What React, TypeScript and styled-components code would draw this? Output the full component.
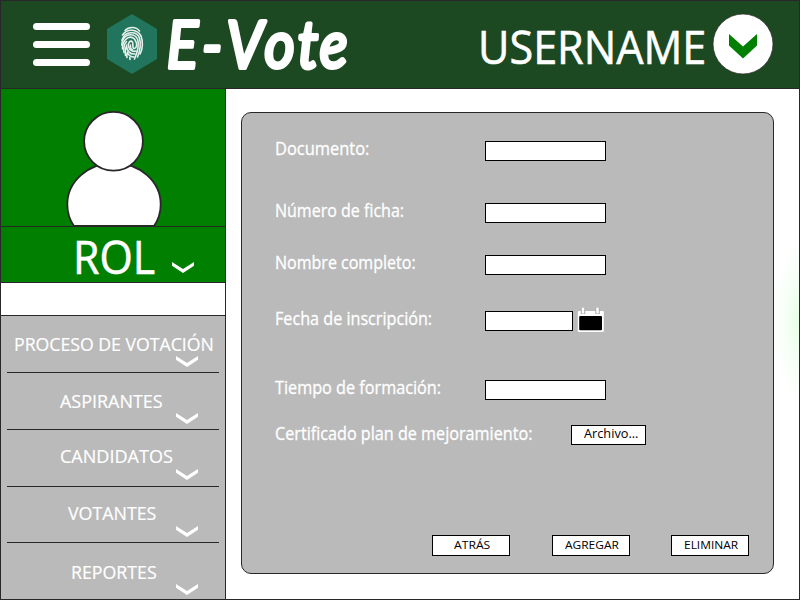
import React, { useLayoutEffect, useRef, useState } from "react";
import styled, { createGlobalStyle } from "styled-components";

const INK = "#29272a";
const GREEN = "#007f00";
const GRAY = "#bababa";

const GlobalStyle = createGlobalStyle`
  * { box-sizing: border-box; }
  body { margin: 0; background: #fff; }
`;

const Page = styled.div`
  width: 800px;
  height: 600px;
  display: flex;
  flex-direction: column;
  overflow: hidden;
  border: 1px solid ${INK};
  background: #fff;
  color: #fff;
  font-family: "Open Sans", "Noto Sans", sans-serif;
`;

const TextBox = styled.span<{ $w: number; $size: number; $lh: number }>`
  display: block;
  flex: none;
  width: ${(p) => p.$w}px;
  height: ${(p) => p.$lh}px;
  font-size: ${(p) => p.$size}px;
  line-height: ${(p) => p.$lh}px;
  white-space: nowrap;
`;

const TextInner = styled.span`
  display: inline-block;
  transform-origin: 0 50%;
`;

type FitProps = { w: number; size: number; lh: number; children: string; className?: string };

/* Condenses or widens a line of text so that it takes exactly the given width. */
function FitText({ w, size, lh, children, className }: FitProps) {
  const ref = useRef<HTMLSpanElement>(null);
  const [scale, setScale] = useState(1);
  useLayoutEffect(() => {
    if (ref.current) setScale(w / ref.current.offsetWidth);
  }, [w, size, children]);
  return (
    <TextBox $w={w} $size={size} $lh={lh} className={className}>
      <TextInner ref={ref} style={{ transform: `scaleX(${scale})` }}>
        {children}
      </TextInner>
    </TextBox>
  );
}

const Header = styled.header`
  flex: none;
  height: 88px;
  display: flex;
  align-items: flex-start;
  background: #1c4921;
  border-bottom: 1px solid ${INK};
`;

const MenuButton = styled.div`
  width: 57px;
  margin: 22px 0 0 32px;
  display: flex;
  flex-direction: column;
  gap: 11px;
`;

const Bar = styled.span`
  height: 7px;
  border-radius: 4px;
  background: #fff;
`;

const Hexagon = styled.svg`
  flex: none;
  width: 50px;
  height: 60px;
  margin: 13px 0 0 17px;
`;

const Brand = styled.svg`
  flex: none;
  width: 190px;
  height: 86px;
  margin-left: 8px;
  font-family: Lato, sans-serif;
  font-style: italic;
  font-weight: 400;
  font-size: 66px;
`;

const UserName = styled(FitText)`
  margin: 14px 0 0 auto;
  -webkit-text-stroke: 0.6px #fff;
`;

const UserToggle = styled.svg`
  flex: none;
  width: 62px;
  height: 62px;
  margin: 12px 25px 0 6px;
`;

const Body = styled.div`
  flex: 1;
  display: flex;
  min-height: 0;
`;

const Sidebar = styled.aside`
  flex: none;
  width: 225px;
  border-right: 1px solid ${INK};
  display: flex;
  flex-direction: column;
`;

const AvatarBox = styled.div`
  height: 138px;
  background: ${GREEN};
  border-bottom: 1px solid ${INK};
  svg { display: block; }
`;

const Role = styled.div`
  height: 56px;
  display: flex;
  background: ${GREEN};
  border-bottom: 1px solid ${INK};
`;

const RoleName = styled(FitText)`
  margin: -2px 0 0 72px;
  -webkit-text-stroke: 0.6px #fff;
`;

const Gap = styled.div`
  height: 33px;
  border-bottom: 1px solid ${INK};
`;

const Menu = styled.nav`
  flex: 1;
  padding: 0 6px;
  background: ${GRAY};
`;

const MenuItem = styled.div<{ $h: number; $top: number; $left: number; $gap: number }>`
  height: ${(p) => p.$h}px;
  padding: ${(p) => p.$top}px 0 0 ${(p) => p.$left}px;
  display: flex;
  flex-direction: column;
  gap: ${(p) => p.$gap}px;
  border-bottom: 1px solid ${INK};
  -webkit-text-stroke: 0.2px #fff;
  &:last-child { border-bottom: 0; }
  svg { margin-left: ${(p) => 169 - p.$left}px; }
`;

const ChevronSvg = styled.svg`
  display: block;
  flex: none;
  width: 22px;
  height: 11px;
`;

const RoleChevron = styled.div`
  margin: 35px 0 0 17px;
`;

function Chevron() {
  return (
    <ChevronSvg viewBox="0 0 22 11">
      <path d="M0 0 L11 7 L22 0 V3.8 L11 11 L0 3.8 Z" fill="#fff" />
    </ChevronSvg>
  );
}

const Main = styled.main`
  flex: 1;
  padding: 23px 25px 0 15px;
  background: radial-gradient(ellipse 25px 80px at 573px 232px, #e6ffe6, #f4fff4 45%, rgba(255, 255, 255, 0) 100%) #fff;
`;

const Panel = styled.form`
  height: 462px;
  padding: 25px 24px 0 33px;
  display: flex;
  flex-direction: column;
  background: ${GRAY};
  border: 1px solid ${INK};
  border-radius: 10px;
`;

const Field = styled.div<{ $h: number }>`
  flex: none;
  height: ${(p) => p.$h}px;
  display: flex;
  align-items: flex-start;
`;

const LabelCell = styled.div<{ $w: number }>`
  flex: none;
  width: ${(p) => p.$w}px;
  -webkit-text-stroke: 0.3px #fff;
`;

const Input = styled.input<{ $w: number }>`
  width: ${(p) => p.$w}px;
  height: 20px;
  margin: 3px 0 0;
  padding: 0 4px;
  border: 1px solid #000;
  border-radius: 0;
  background: #fff;
  outline: none;
`;

const CalendarIcon = styled.svg`
  flex: none;
  width: 28px;
  height: 27px;
  margin: -1px 0 0 4px;
`;

const Button = styled.button<{ $w: number; $h: number }>`
  width: ${(p) => p.$w}px;
  height: ${(p) => p.$h}px;
  padding: 0 0 2px;
  display: flex;
  align-items: center;
  justify-content: center;
  border: 1px solid #000;
  background: #fff;
  color: #000;
  font-family: inherit;
`;

const FileButton = styled(Button)`
  margin-top: 2px;
  padding-left: 4px;
`;

const Actions = styled.div`
  display: grid;
  grid-template-columns: 120px 119px 78px;
  margin: 89px 0 0 157px;
`;

const fields = [
  { label: "Documento:", w: 94, h: 62, input: 121 },
  { label: "Número de ficha:", w: 129, h: 52, input: 121 },
  { label: "Nombre completo:", w: 141, h: 56, input: 121 },
  { label: "Fecha de inscripción:", w: 157, h: 69, input: 88, calendar: true },
  { label: "Tiempo de formación:", w: 166, h: 46, input: 121 },
];

const items = [
  { name: "PROCESO DE VOTACIÓN", left: 7, w: 200, h: 57, top: 16, gap: 0 },
  { name: "ASPIRANTES", left: 53, w: 103, h: 57, top: 16, gap: 0 },
  { name: "CANDIDATOS", left: 53, w: 113, h: 57, top: 14, gap: 1 },
  { name: "VOTANTES", left: 61, w: 88, h: 56, top: 14, gap: 1 },
  { name: "REPORTES", left: 64, w: 86, h: 56, top: 17, gap: 0 },
];

const actions = [
  { name: "ATRÁS", w: 36 },
  { name: "AGREGAR", w: 54 },
  { name: "ELIMINAR", w: 54 },
];

export default function App() {
  return (
    <>
      <GlobalStyle />
      <Page>
        <Header>
          <MenuButton>
            <Bar />
            <Bar />
            <Bar />
          </MenuButton>
          <Hexagon viewBox="0 0 50 60">
            <path d="M25 0 L50 15 V45 L25 60 L0 45 V15 Z" fill="#20755c" />
            <g fill="none" stroke="#e6f1ec" strokeWidth="1.6" strokeLinecap="round">
              <path d="M18 16.5 C22 12.5 29 12.5 32.5 17" />
              <path d="M15.5 21 C20 14.5 30 14.5 34 22 C36 27 36 35 33 40" />
              <path d="M15 26 C18 16.5 30 17 32.5 24 C34 30 33.5 36 30.5 43" />
              <path d="M14.8 31 C15 20 27 17.5 30.5 25 C32.5 31 31 37 27.5 45" />
              <path d="M15.5 35 C15 25 23 20.5 27.5 25 C31 30 29.5 34 27.5 34.5 C25 35 26.5 30 25.5 28 C23.5 25.5 20.5 29 21.5 32.5 C22.5 37 27 38 29 37" />
              <path d="M17 38.5 C16.5 34 17 30 19.5 27.5" />
              <path d="M18.5 41.5 C18 37 18.5 34 19.5 32 C20 37 23 40.5 28 40" />
              <path d="M20 43.5 C19.5 41 19.8 39.5 20.3 38.5 C21.5 41 24 43 27 43" />
              <path d="M23 45.5 L22.8 43.5 M23.5 31 C23 33 24 35 25.5 36" />
            </g>
          </Hexagon>
          <Brand viewBox="0 0 190 86">
            <text
              transform="scale(0.88 1)"
              x="2 42 70 113 151 176"
              y="67"
              fill="#fff"
              stroke="#fff"
              strokeWidth="4"
              strokeLinejoin="round"
            >
              E-Vote
            </text>
          </Brand>
          <UserName w={228} size={46} lh={62}>USERNAME</UserName>
          <UserToggle viewBox="0 0 62 62">
            <circle cx="31" cy="31" r="30" fill="#fff" stroke={INK} strokeWidth="0.7" />
            <path d="M17 21 L31 33.5 L45 21 V32.5 L31 45.5 L17 32.5 Z" fill={GREEN} />
          </UserToggle>
        </Header>
        <Body>
          <Sidebar>
            <AvatarBox>
              <svg width="224" height="137" viewBox="0 0 224 137">
                <ellipse cx="113" cy="115.5" rx="46.7" ry="41.5" fill="#fff" stroke={INK} strokeWidth="1.8" />
                <circle cx="112.5" cy="52.3" r="29.4" fill="#fff" stroke={INK} strokeWidth="1.8" />
                <path d="M73 136.5 H154" stroke={INK} strokeWidth="1" />
              </svg>
            </AvatarBox>
            <Role>
              <RoleName w={82} size={46} lh={62}>ROL</RoleName>
              <RoleChevron>
                <Chevron />
              </RoleChevron>
            </Role>
            <Gap />
            <Menu>
              {items.map((it) => (
                <MenuItem key={it.name} $h={it.h} $top={it.top} $left={it.left} $gap={it.gap}>
                  <FitText w={it.w} size={19} lh={24}>{it.name}</FitText>
                  <Chevron />
                </MenuItem>
              ))}
            </Menu>
          </Sidebar>
          <Main>
            <Panel>
              {fields.map((f) => (
                <Field key={f.label} $h={f.h}>
                  <LabelCell $w={210}>
                    <FitText w={f.w} size={17.5} lh={20}>{f.label}</FitText>
                  </LabelCell>
                  <Input $w={f.input} aria-label={f.label} />
                  {f.calendar && (
                    <CalendarIcon viewBox="0 0 28 27">
                      <rect x="0.8" y="4" width="26" height="21" rx="1" fill="#fff" />
                      <rect x="2.2" y="9" width="22.8" height="14.2" rx="1" fill="#000" />
                      <path d="M6 1.5 V7 M20.5 1.5 V7" stroke="#aaa" strokeWidth="4.4" />
                      <path d="M6 0.8 V6.5 M20.5 0.8 V6.5" stroke="#fff" strokeWidth="2.4" />
                    </CalendarIcon>
                  )}
                </Field>
              ))}
              <Field $h={23}>
                <LabelCell $w={296}>
                  <FitText w={257} size={17.5} lh={20}>Certificado plan de mejoramiento:</FitText>
                </LabelCell>
                <FileButton type="button" $w={75} $h={20}>
                  <FitText w={54} size={12.5} lh={18}>Archivo...</FitText>
                </FileButton>
              </Field>
              <Actions>
                {actions.map((a) => (
                  <Button type="button" key={a.name} $w={78} $h={21}>
                    <FitText w={a.w} size={11.5} lh={19}>{a.name}</FitText>
                  </Button>
                ))}
              </Actions>
            </Panel>
          </Main>
        </Body>
      </Page>
    </>
  );
}
